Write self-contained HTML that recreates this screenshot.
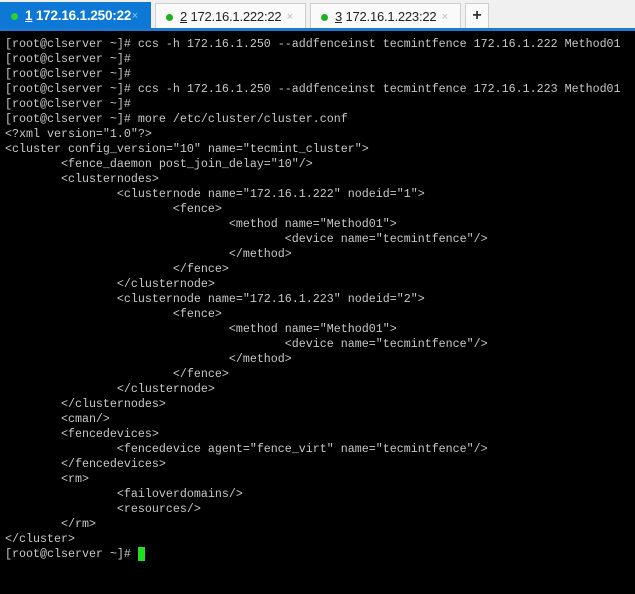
<!DOCTYPE html>
<html><head><style>
body{margin:0;width:635px;height:594px;background:#000;overflow:hidden;position:relative;font-family:"Liberation Sans",sans-serif}
#bar{position:absolute;left:0;top:0;width:635px;height:29px;background:#f0f0f0}
#line{position:absolute;left:0;top:28px;width:635px;height:3px;background:#1a7ad4}
.tab{position:absolute;top:3px;height:26px;width:151px;background:#fafafa;border:1px solid #cfcfcf;border-bottom:none;box-sizing:border-box;font-size:13px;color:#222;line-height:26px;letter-spacing:-0.2px}
.tab.a{top:2px;height:27px;background:#0d78d6;color:#fff;border-color:#0d78d6;font-weight:bold;font-size:13.5px}
.dot{position:absolute;left:10px;top:10px;width:7px;height:7px;border-radius:50%;background:#1bb31b}
.a .dot{background:#2ed12e}
.t{position:absolute;left:24px}
.x{position:absolute;right:12px;color:#bbb;font-size:11px;font-weight:normal}
.a .x{color:#9cc7ef}
#plus{position:absolute;left:465px;top:3px;width:24px;height:26px;background:#fafafa;border:1px solid #cfcfcf;border-bottom:none;box-sizing:border-box;text-align:center;line-height:24px;font-size:16px;font-weight:bold;color:#333}
pre{position:absolute;left:5px;top:37px;margin:0;font-family:"Liberation Mono",monospace;font-size:11.67px;line-height:15px;color:#c8c8c8}
#cur{position:absolute;left:138px;top:547px;width:7px;height:14px;background:#1ee01e}
</style></head><body>
<div id="bar"></div>
<div class="tab a" style="left:0"><span class="dot"></span><span class="t"><u>1</u> 172.16.1.250:22</span><span class="x">×</span></div>
<div class="tab" style="left:155px"><span class="dot"></span><span class="t"><u>2</u> 172.16.1.222:22</span><span class="x">×</span></div>
<div class="tab" style="left:310px"><span class="dot"></span><span class="t"><u>3</u> 172.16.1.223:22</span><span class="x">×</span></div>
<div id="plus">+</div>
<div id="line"></div>
<pre>[root@clserver ~]# ccs -h 172.16.1.250 --addfenceinst tecmintfence 172.16.1.222 Method01
[root@clserver ~]#
[root@clserver ~]#
[root@clserver ~]# ccs -h 172.16.1.250 --addfenceinst tecmintfence 172.16.1.223 Method01
[root@clserver ~]#
[root@clserver ~]# more /etc/cluster/cluster.conf
&lt;?xml version="1.0"?&gt;
&lt;cluster config_version="10" name="tecmint_cluster"&gt;
        &lt;fence_daemon post_join_delay="10"/&gt;
        &lt;clusternodes&gt;
                &lt;clusternode name="172.16.1.222" nodeid="1"&gt;
                        &lt;fence&gt;
                                &lt;method name="Method01"&gt;
                                        &lt;device name="tecmintfence"/&gt;
                                &lt;/method&gt;
                        &lt;/fence&gt;
                &lt;/clusternode&gt;
                &lt;clusternode name="172.16.1.223" nodeid="2"&gt;
                        &lt;fence&gt;
                                &lt;method name="Method01"&gt;
                                        &lt;device name="tecmintfence"/&gt;
                                &lt;/method&gt;
                        &lt;/fence&gt;
                &lt;/clusternode&gt;
        &lt;/clusternodes&gt;
        &lt;cman/&gt;
        &lt;fencedevices&gt;
                &lt;fencedevice agent="fence_virt" name="tecmintfence"/&gt;
        &lt;/fencedevices&gt;
        &lt;rm&gt;
                &lt;failoverdomains/&gt;
                &lt;resources/&gt;
        &lt;/rm&gt;
&lt;/cluster&gt;
[root@clserver ~]# </pre>
<div id="cur"></div>
</body></html>
